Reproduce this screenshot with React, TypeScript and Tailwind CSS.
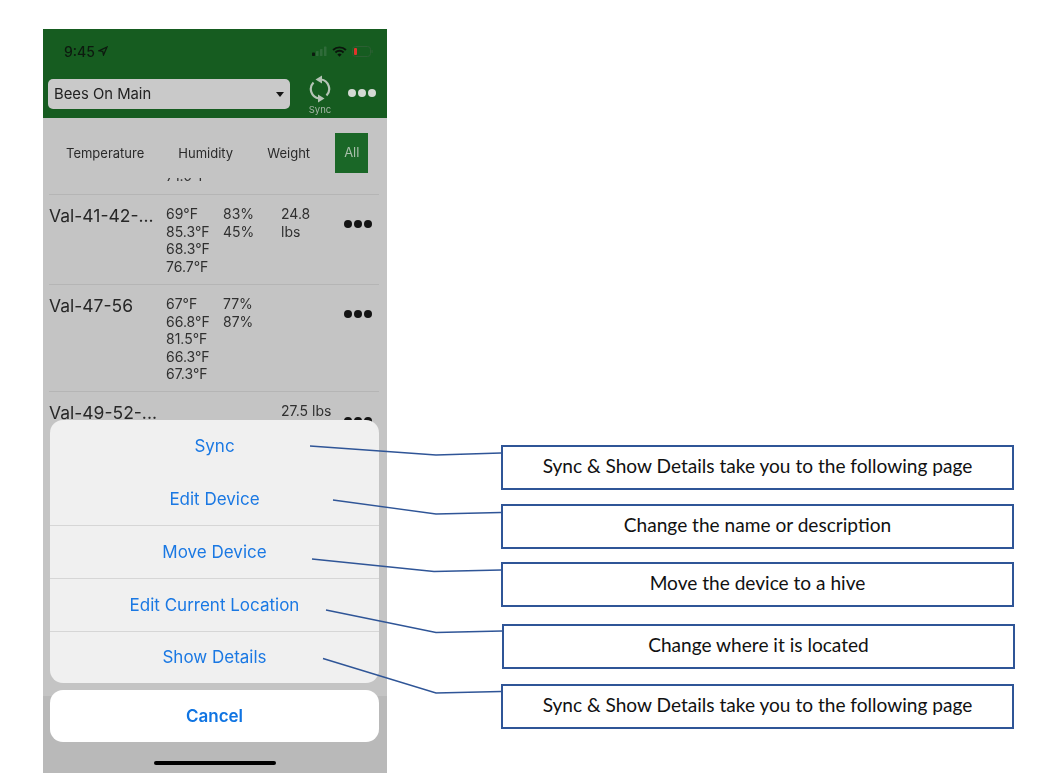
import React from "react";

const phoneFont = { fontFamily: '"Inter","Liberation Sans",sans-serif' };

function Dots({ color, size, gap }: { color: string; size: string; gap: string }) {
  return (
    <div className={`flex ${gap}`}>
      {[0, 1, 2].map((i) => (
        <div key={i} className={`${size} rounded-full ${color}`} />
      ))}
    </div>
  );
}

function StatusIcons() {
  return (
    <div className="flex items-center gap-[5px]">
      <svg width="15" height="10" viewBox="0 0 15 10">
        <rect x="0" y="6.5" width="3" height="3.5" rx="0.8" fill="#0c1a0e" />
        <rect x="4" y="5" width="2.5" height="5" rx="0.6" fill="#2f6b39" />
        <rect x="8" y="3" width="2.5" height="7" rx="0.6" fill="#2f6b39" />
        <rect x="12" y="0.5" width="2.5" height="9.5" rx="0.6" fill="#2f6b39" />
      </svg>
      <svg width="15" height="11" viewBox="0 0 14 10" fill="none" stroke="#0b150c" strokeWidth="1.8">
        <path d="M1 3.6a8.6 8.6 0 0 1 12 0" />
        <path d="M3.2 5.9a5.4 5.4 0 0 1 7.6 0" />
        <path d="M7 9.8 5 7.8a2.8 2.8 0 0 1 4 0Z" fill="#0b150c" stroke="none" />
      </svg>
      <svg width="21" height="11" viewBox="0 0 21 11" fill="none">
        <rect x="0.5" y="0.5" width="18" height="10" rx="3" stroke="#2c5f33" />
        <rect x="2" y="2" width="3" height="7" rx="1" fill="#e2342b" />
        <rect x="19.5" y="4" width="1.2" height="3" rx="0.6" fill="#2c5f33" />
      </svg>
    </div>
  );
}

function SyncIcon() {
  return (
    <svg width="22" height="28" viewBox="0 0 22 28" fill="none" stroke="#b5c4b6" strokeWidth="2.2">
      <path d="M12 4.5A9.5 9.5 0 0 1 17.5 20.5" />
      <path d="M10 23.5A9.5 9.5 0 0 1 4.5 7.5" />
      <path d="M6.5 4.5 13 0.5V8.5Z" fill="#b5c4b6" stroke="none" />
      <path d="M15.5 23.5 9 19.5V27.5Z" fill="#b5c4b6" stroke="none" />
    </svg>
  );
}

function Col({ w, lines }: { w: string; lines: string[] }) {
  return (
    <div className={`${w} shrink-0 text-[14px] leading-[17.6px] text-[#303030]`}>
      {lines.map((l) => (
        <div key={l}>{l}</div>
      ))}
    </div>
  );
}

function DeviceRow({
  name,
  temps,
  hums,
  weight,
  h,
}: {
  name: string;
  temps: string[];
  hums: string[];
  weight: string[];
  h: string;
}) {
  return (
    <div className={`${h} shrink-0 ml-[6px] mr-[8px] border-t border-[#b5b5b5] flex relative`}>
      <div className="w-[117px] shrink-0 text-[17.5px] leading-[24px] text-[#272727] mt-[9px]">{name}</div>
      <div className="flex mt-[10px]">
        <Col w="w-[57px]" lines={temps} />
        <Col w="w-[58px]" lines={hums} />
        <Col w="w-[58px]" lines={weight} />
      </div>
      <div className="absolute left-[295px] top-[25px]">
        <Dots color="bg-[#141414]" size="w-[7.5px] h-[7.5px]" gap="gap-[2.5px]" />
      </div>
    </div>
  );
}

const actions = ["Sync", "Edit Device", "Move Device", "Edit Current Location", "Show Details"];

const callouts = [
  { text: "Sync & Show Details take you to the following page", cls: "mt-[416px] ml-0" },
  { text: "Change the name or description", cls: "mt-[14px] ml-0" },
  { text: "Move the device to a hive", cls: "mt-[13px] ml-0" },
  { text: "Change where it is located", cls: "mt-[17px] ml-[1px]" },
  { text: "Sync & Show Details take you to the following page", cls: "mt-[15px] ml-0" },
];

export default function App() {
  return (
    <div className="relative w-[1054px] h-[784px] bg-white overflow-hidden flex items-start pt-[29px] pl-[43px]">
      <div
        className="relative w-[344px] h-[744px] shrink-0 bg-[#c4c4c4] overflow-hidden flex flex-col blur-[0.4px]"
        style={phoneFont}
      >
        <div className="h-[89px] shrink-0 bg-[#165c20] flex flex-col">
          <div className="flex items-center justify-between h-[50px] pl-[21px] pr-[14px] pb-[6px]">
            <div className="flex items-center gap-[3px] text-[14px] font-medium text-[#0d1a0f]">
              <span>9:45</span>
              <svg width="10" height="10" viewBox="0 0 10 10" fill="none" stroke="#0d1a0f" strokeWidth="1.3">
                <path d="M9 1 1 4.8l3.7.6.8 3.6L9 1Z" />
              </svg>
            </div>
            <StatusIcons />
          </div>
          <div className="flex items-start pl-[5px]">
            <div className="w-[242px] h-[30px] rounded-[5px] bg-[#c9c9c9] flex items-center justify-between pl-[6px] pr-[6px] pt-[1px] text-[14.8px] text-[#222]">
              <span>Bees On Main</span>
              <div className="w-0 h-0 border-x-[4px] border-x-transparent border-t-[5px] border-t-[#161616]" />
            </div>
            <div className="w-[60px] flex flex-col items-center -mt-[4px]">
              <SyncIcon />
              <span className="text-[9.5px] leading-[11px] text-[#a4b6a6] mt-[1px]">Sync</span>
            </div>
            <div className="mt-[10px] -ml-[2px]">
              <Dots color="bg-[#d4d9d4]" size="w-[7.5px] h-[7.5px]" gap="gap-[2.5px]" />
            </div>
          </div>
        </div>

        <div className="h-[60px] shrink-0 flex items-start text-[13px] text-[#2a2a2a]">
          <span className="ml-[23px] mt-[27px] leading-[16px]">Temperature</span>
          <span className="ml-[34px] mt-[27px] leading-[16px] w-[56px]">Humidity</span>
          <span className="ml-[33px] mt-[27px] leading-[16px] w-[44px]">Weight</span>
          <div className="ml-[24px] mt-[15px] w-[33px] h-[40px] bg-[#1a6727] flex items-center justify-center text-[#a9bfab]">
            All
          </div>
        </div>

        <div className="flex-1 overflow-hidden flex flex-col min-h-0">
          <div className="h-[16px] shrink-0 overflow-hidden pl-[123px] text-[14px] leading-[17.6px] text-[#333]">
            <div className="-mt-[11px]">71.0°F</div>
          </div>
          <DeviceRow
            h="h-[90px]"
            name="Val-41-42-..."
            temps={["69°F", "85.3°F", "68.3°F", "76.7°F"]}
            hums={["83%", "45%"]}
            weight={["24.8", "lbs"]}
          />
          <DeviceRow
            h="h-[107px]"
            name="Val-47-56"
            temps={["67°F", "66.8°F", "81.5°F", "66.3°F", "67.3°F"]}
            hums={["77%", "87%"]}
            weight={[]}
          />
          <DeviceRow h="h-[107px]" name="Val-49-52-..." temps={[]} hums={[]} weight={["27.5 lbs"]} />
        </div>

        <div className="absolute left-0 right-0 bottom-0 h-[77px] bg-[#b9b9b9]" />

        <div className="absolute left-[7px] top-[391px] w-[329px] flex flex-col">
          <div className="rounded-[13px] bg-[#f0f0f0] h-[263px] flex flex-col overflow-hidden">
            {actions.map((a, i) => (
              <div
                key={a}
                className={`flex-1 flex items-center justify-center text-[17px] text-[#1a78e3] ${
                  i < 3 ? "pt-[2px]" : "pt-[1px]"
                } ${i >= 1 && i <= 3 ? "border-b border-[#d6d6d6]" : ""}`}
              >
                {a}
              </div>
            ))}
          </div>
          <div className="mt-[7px] h-[52px] rounded-[13px] bg-white flex items-center justify-center pt-[1px] text-[17px] font-semibold text-[#0f74e2]">
            Cancel
          </div>
        </div>

        <div className="absolute left-[111px] bottom-[8px] w-[122px] h-[4px] rounded-full bg-black" />
      </div>

      <div className="flex flex-col ml-[114px] w-[514px] shrink-0" style={{ fontFamily: 'Lato,"Open Sans",sans-serif' }}>
        {callouts.map((c, i) => (
          <div
            key={i}
            className={`${c.cls} w-[513px] h-[45px] border-2 border-[#2f5597] bg-white flex items-center justify-center pb-[2px] text-[19.1px] text-[#111]`}
          >
            {c.text}
          </div>
        ))}
      </div>

      <svg className="absolute left-0 top-0 pointer-events-none" width="1054" height="784" fill="none" stroke="#2f5597" strokeWidth="1.4">
        <polyline points="310,446 436,455 501,453" />
        <polyline points="333,500 436,514 501,512.5" />
        <polyline points="312,559 434,571.5 501,570" />
        <polyline points="326,610 436,632.5 502,631" />
        <polyline points="323,658.5 436,693 501,691.5" />
      </svg>
    </div>
  );
}
